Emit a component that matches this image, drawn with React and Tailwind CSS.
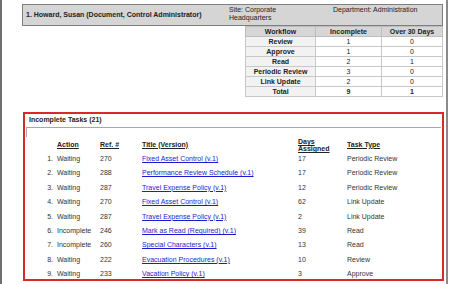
import React from 'react';

const workflow = [
  { name: 'Review', incomplete: 1, over: 0 },
  { name: 'Approve', incomplete: 1, over: 0 },
  { name: 'Read', incomplete: 2, over: 1 },
  { name: 'Periodic Review', incomplete: 3, over: 0 },
  { name: 'Link Update', incomplete: 2, over: 0 },
];

const tasks = [
  { action: 'Waiting', ref: 270, title: 'Fixed Asset Control (v.1)', days: 17, type: 'Periodic Review' },
  { action: 'Waiting', ref: 288, title: 'Performance Review Schedule (v.1)', days: 17, type: 'Periodic Review' },
  { action: 'Waiting', ref: 287, title: 'Travel Expense Policy (v.1)', days: 12, type: 'Periodic Review' },
  { action: 'Waiting', ref: 270, title: 'Fixed Asset Control (v.1)', days: 62, type: 'Link Update' },
  { action: 'Waiting', ref: 287, title: 'Travel Expense Policy (v.1)', days: 2, type: 'Link Update' },
  { action: 'Incomplete', ref: 246, title: 'Mark as Read (Required) (v.1)', days: 39, type: 'Read' },
  { action: 'Incomplete', ref: 260, title: 'Special Characters (v.1)', days: 13, type: 'Read' },
  { action: 'Waiting', ref: 222, title: 'Evacuation Procedures (v.1)', days: 10, type: 'Review' },
  { action: 'Waiting', ref: 233, title: 'Vacation Policy (v.1)', days: 3, type: 'Approve' },
];

const App = () => {
  return (
    <div className="w-[450px] h-[284px] overflow-hidden bg-white">
      <div className="mr-[2px] h-[284px] border-l-2 border-r-2 border-l-[#6e6e6e] border-r-[#8a8a8a] pl-[20px] pr-[3px] pt-[4px] font-['Liberation_Sans',Arial,sans-serif] text-[7px] text-[#333]">
        {/* Person header */}
        <div className="flex h-[22px] border border-[#7f7f7f] bg-[#d5d5d5] text-[#222]">
          <div className="flex w-[206px] items-center pl-[3px] font-bold leading-[8px]">
            1. Howard, Susan (Document, Control Administrator)
          </div>
          <div className="w-[104px] pt-[1px] leading-[8px]">
            Site: Corporate
            <br />
            Headquarters
          </div>
          <div className="pt-[1px] leading-[8px]">Department: Administration</div>
        </div>

        {/* Workflow summary */}
        <div className="flex justify-end">
          <table className="w-[198px] border-collapse text-center leading-[9px] text-[#222]">
            <thead>
              <tr className="h-[10px] bg-[#d6d6d6] font-bold">
                <th className="w-[70px] border border-[#bdbdbd] p-0">Workflow</th>
                <th className="w-[66px] border border-[#bdbdbd] p-0">Incomplete</th>
                <th className="border border-[#bdbdbd] p-0">Over 30 Days</th>
              </tr>
            </thead>
            <tbody>
              {workflow.map((w) => (
                <tr key={w.name} className="h-[10px]">
                  <td className="border border-[#c8c8c8] bg-[#f2f2f2] p-0 font-bold">{w.name}</td>
                  <td className="border border-[#c8c8c8] p-0">{w.incomplete}</td>
                  <td className="border border-[#c8c8c8] p-0">{w.over}</td>
                </tr>
              ))}
              <tr className="h-[10px] font-bold">
                <td className="border border-[#c8c8c8] bg-[#f2f2f2] p-0">Total</td>
                <td className="border border-[#c8c8c8] p-0">9</td>
                <td className="border border-[#c8c8c8] p-0">1</td>
              </tr>
            </tbody>
          </table>
        </div>

        {/* Incomplete tasks */}
        <div className="mt-[15px] ml-[1px] h-[169px] w-[421px] overflow-hidden border-2 border-[#d42b2b]">
          <div className="h-[13px] pl-[4px] pt-[1px] font-bold leading-[10px] text-[#222]">
            Incomplete Tasks (21)
          </div>
          <div className="mx-[1px] h-[10px] border-t border-l border-[#a8a8a8]" />

          <div className="flex h-[16px] items-center font-bold text-[#222] underline">
            <div className="w-[28px]" />
            <div className="w-[47px] pl-[4px]">Action</div>
            <div className="w-[42px]">Ref. #</div>
            <div className="w-[156px]">Title (Version)</div>
            <div className="w-[49px] leading-[7px]">
              Days
              <br />
              Assigned
            </div>
            <div>Task Type</div>
          </div>

          {tasks.map((t, i) => (
            <div key={i} className="flex h-[14.4px] leading-[12px]">
              <div className="w-[28px] text-right">{i + 1}.</div>
              <div className="w-[47px] pl-[4px]">{t.action}</div>
              <div className="w-[42px]">{t.ref}</div>
              <div className="w-[156px]">
                <a href="#" className="text-[#1c1ccf] underline">
                  {t.title}
                </a>
              </div>
              <div className="w-[49px]">{t.days}</div>
              <div>{t.type}</div>
            </div>
          ))}
        </div>
      </div>
    </div>
  );
};

export default App;
